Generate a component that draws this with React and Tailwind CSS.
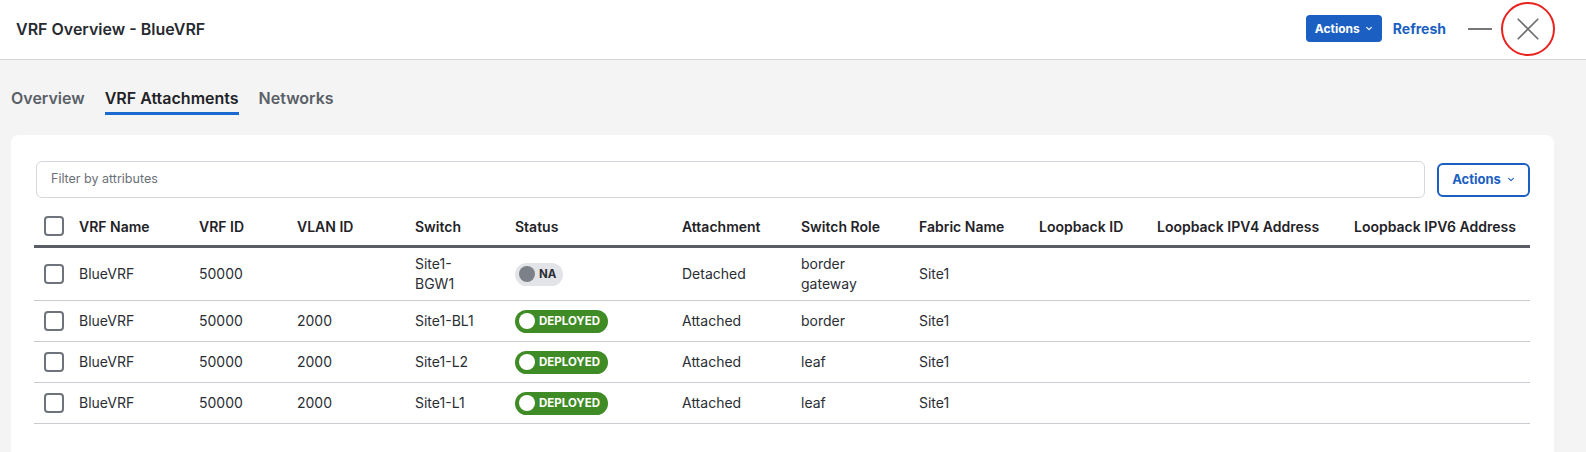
import React from "react";

const cols = [
  "w-[35px]",
  "w-[120px]",
  "w-[98px]",
  "w-[118px]",
  "w-[100px]",
  "w-[167px]",
  "w-[119px]",
  "w-[118px]",
  "w-[120px]",
  "w-[118px]",
  "w-[197px]",
  "w-[186px]",
];

const headers = [
  "VRF Name",
  "VRF ID",
  "VLAN ID",
  "Switch",
  "Status",
  "Attachment",
  "Switch Role",
  "Fabric Name",
  "Loopback ID",
  "Loopback IPV4 Address",
  "Loopback IPV6 Address",
];

const rows = [
  { name: "BlueVRF", id: "50000", vlan: "", sw: ["Site1-", "BGW1"], status: "NA", att: "Detached", role: ["border", "gateway"], fabric: "Site1" },
  { name: "BlueVRF", id: "50000", vlan: "2000", sw: ["Site1-BL1"], status: "DEPLOYED", att: "Attached", role: ["border"], fabric: "Site1" },
  { name: "BlueVRF", id: "50000", vlan: "2000", sw: ["Site1-L2"], status: "DEPLOYED", att: "Attached", role: ["leaf"], fabric: "Site1" },
  { name: "BlueVRF", id: "50000", vlan: "2000", sw: ["Site1-L1"], status: "DEPLOYED", att: "Attached", role: ["leaf"], fabric: "Site1" },
];

const Chevron = ({ className }) => (
  <svg viewBox="0 0 10 6" className={className} fill="none" stroke="currentColor" strokeWidth="1.4" strokeLinecap="round" strokeLinejoin="round">
    <path d="M2 1.5 L5 4.5 L8 1.5" />
  </svg>
);

const Checkbox = () => (
  <div className="w-[20px] h-[20px] rounded-[4px] border-2 border-[#6e737b] bg-white" />
);

const StatusPill = ({ status }) => {
  if (status === "NA") {
    return (
      <div className="inline-flex items-center h-[23px] rounded-full bg-[#e2e4e7] pl-[4px] pr-[7px] gap-[4px]">
        <span className="w-[16px] h-[16px] rounded-full bg-[#7c8189]" />
        <span className="text-[11.5px] font-bold text-[#2a2e34]">NA</span>
      </div>
    );
  }
  return (
    <div className="inline-flex items-center h-[23px] rounded-full bg-[#3f8b25] pl-[4px] pr-[8px] gap-[4px]">
      <span className="w-[16px] h-[16px] rounded-full bg-white" />
      <span className="text-[11.5px] font-bold text-white">{status}</span>
    </div>
  );
};

const Lines = ({ lines }) => (
  <div className="flex flex-col">
    {lines.map((l, i) => (
      <span key={i}>{l}</span>
    ))}
  </div>
);

export default function App() {
  return (
    <div className="h-screen overflow-hidden bg-[#f4f4f4] flex flex-col text-[#2a2e34]" style={{ fontFamily: "Inter, 'Liberation Sans', sans-serif" }}>
      {/* header */}
      <div className="h-[60px] shrink-0 bg-white border-b border-[#d6d6d6] flex items-center justify-between pl-[16px] pr-[42px]">
        <div className="text-[16px] font-semibold text-[#272b31] -mt-[2px]">VRF Overview - BlueVRF</div>
        <div className="flex items-center -mt-[2px]">
          <button className="h-[27px] w-[76px] rounded-[4px] bg-[#1c5fc2] text-white text-[12px] font-bold flex items-center justify-center gap-[5px]">
            Actions
            <Chevron className="w-[8px] h-[5px]" />
          </button>
          <span className="ml-[11px] text-[14px] font-bold text-[#1c5fc2]">Refresh</span>
          <span className="ml-[22px] w-[24px] h-[2px] bg-[#767676]" />
          <div className="relative ml-[20px] w-[32px] h-[32px] flex items-center justify-center">
            <svg viewBox="0 0 24 24" className="w-[26px] h-[26px]" fill="none" stroke="#6f6f6f" strokeWidth="1.6" strokeLinecap="round">
              <path d="M3 3 L21 21 M21 3 L3 21" />
            </svg>
            <div className="absolute left-[-11px] top-[-11px] w-[54px] h-[54px] rounded-full border-[2.5px] border-[#e8221c]" />
          </div>
        </div>
      </div>

      {/* tabs */}
      <div className="flex items-start gap-[20px] pl-[11px] pt-[28px] shrink-0">
        <div className="text-[16px] font-semibold text-[#5a6068] leading-[20px] pb-[7px]">Overview</div>
        <div className="text-[16px] font-semibold text-[#1f2328] leading-[20px] pb-[4px] border-b-[3px] border-[#1a6ad0]">VRF Attachments</div>
        <div className="text-[16px] font-semibold text-[#5a6068] leading-[20px] pb-[7px]">Networks</div>
      </div>

      {/* card */}
      <div className="flex-1 ml-[11px] mr-[32px] mt-[20px] bg-white rounded-t-[8px] pt-[26px] pl-[23px] pr-[24px]">
        <div className="flex items-center gap-[12px] pl-[2px]">
          <div className="flex-1 h-[37px] rounded-[6px] border border-[#d3d6da] flex items-center pl-[14px] text-[12.5px] text-[#6b7078]">
            Filter by attributes
          </div>
          <button className="h-[34px] w-[93px] rounded-[6px] border-2 border-[#1c5fc2] text-[#1c5fc2] text-[13px] font-bold flex items-center justify-center gap-[6px]">
            Actions
            <Chevron className="w-[8px] h-[5px]" />
          </button>
        </div>

        {/* table */}
        <div className="mt-[9px] text-[14px]">
          <div className="flex items-center h-[41px] border-b-[3px] border-[#595d65] font-semibold text-[#1f2328]">
            <div className={`${cols[0]} pl-[10px] shrink-0`}>
              <Checkbox />
            </div>
            {headers.map((h, i) => (
              <div key={h} className={`${cols[i + 1]} pl-[10px] shrink-0 whitespace-nowrap`}>
                {h}
              </div>
            ))}
          </div>
          {rows.map((r, ri) => (
            <div key={ri} className="flex items-center min-h-[41px] py-[6px] border-b border-[#c8cbcf] leading-[20px] text-[#2a2e34]">
              <div className={`${cols[0]} pl-[10px] shrink-0`}>
                <Checkbox />
              </div>
              <div className={`${cols[1]} pl-[10px] shrink-0`}>{r.name}</div>
              <div className={`${cols[2]} pl-[10px] shrink-0`}>{r.id}</div>
              <div className={`${cols[3]} pl-[10px] shrink-0`}>{r.vlan}</div>
              <div className={`${cols[4]} pl-[10px] shrink-0`}>
                <Lines lines={r.sw} />
              </div>
              <div className={`${cols[5]} pl-[10px] shrink-0 flex`}>
                <StatusPill status={r.status} />
              </div>
              <div className={`${cols[6]} pl-[10px] shrink-0`}>{r.att}</div>
              <div className={`${cols[7]} pl-[10px] shrink-0`}>
                <Lines lines={r.role} />
              </div>
              <div className={`${cols[8]} pl-[10px] shrink-0`}>{r.fabric}</div>
              <div className={`${cols[9]} pl-[10px] shrink-0`} />
              <div className={`${cols[10]} pl-[10px] shrink-0`} />
              <div className={`${cols[11]} pl-[10px] shrink-0`} />
            </div>
          ))}
        </div>
      </div>
    </div>
  );
}
